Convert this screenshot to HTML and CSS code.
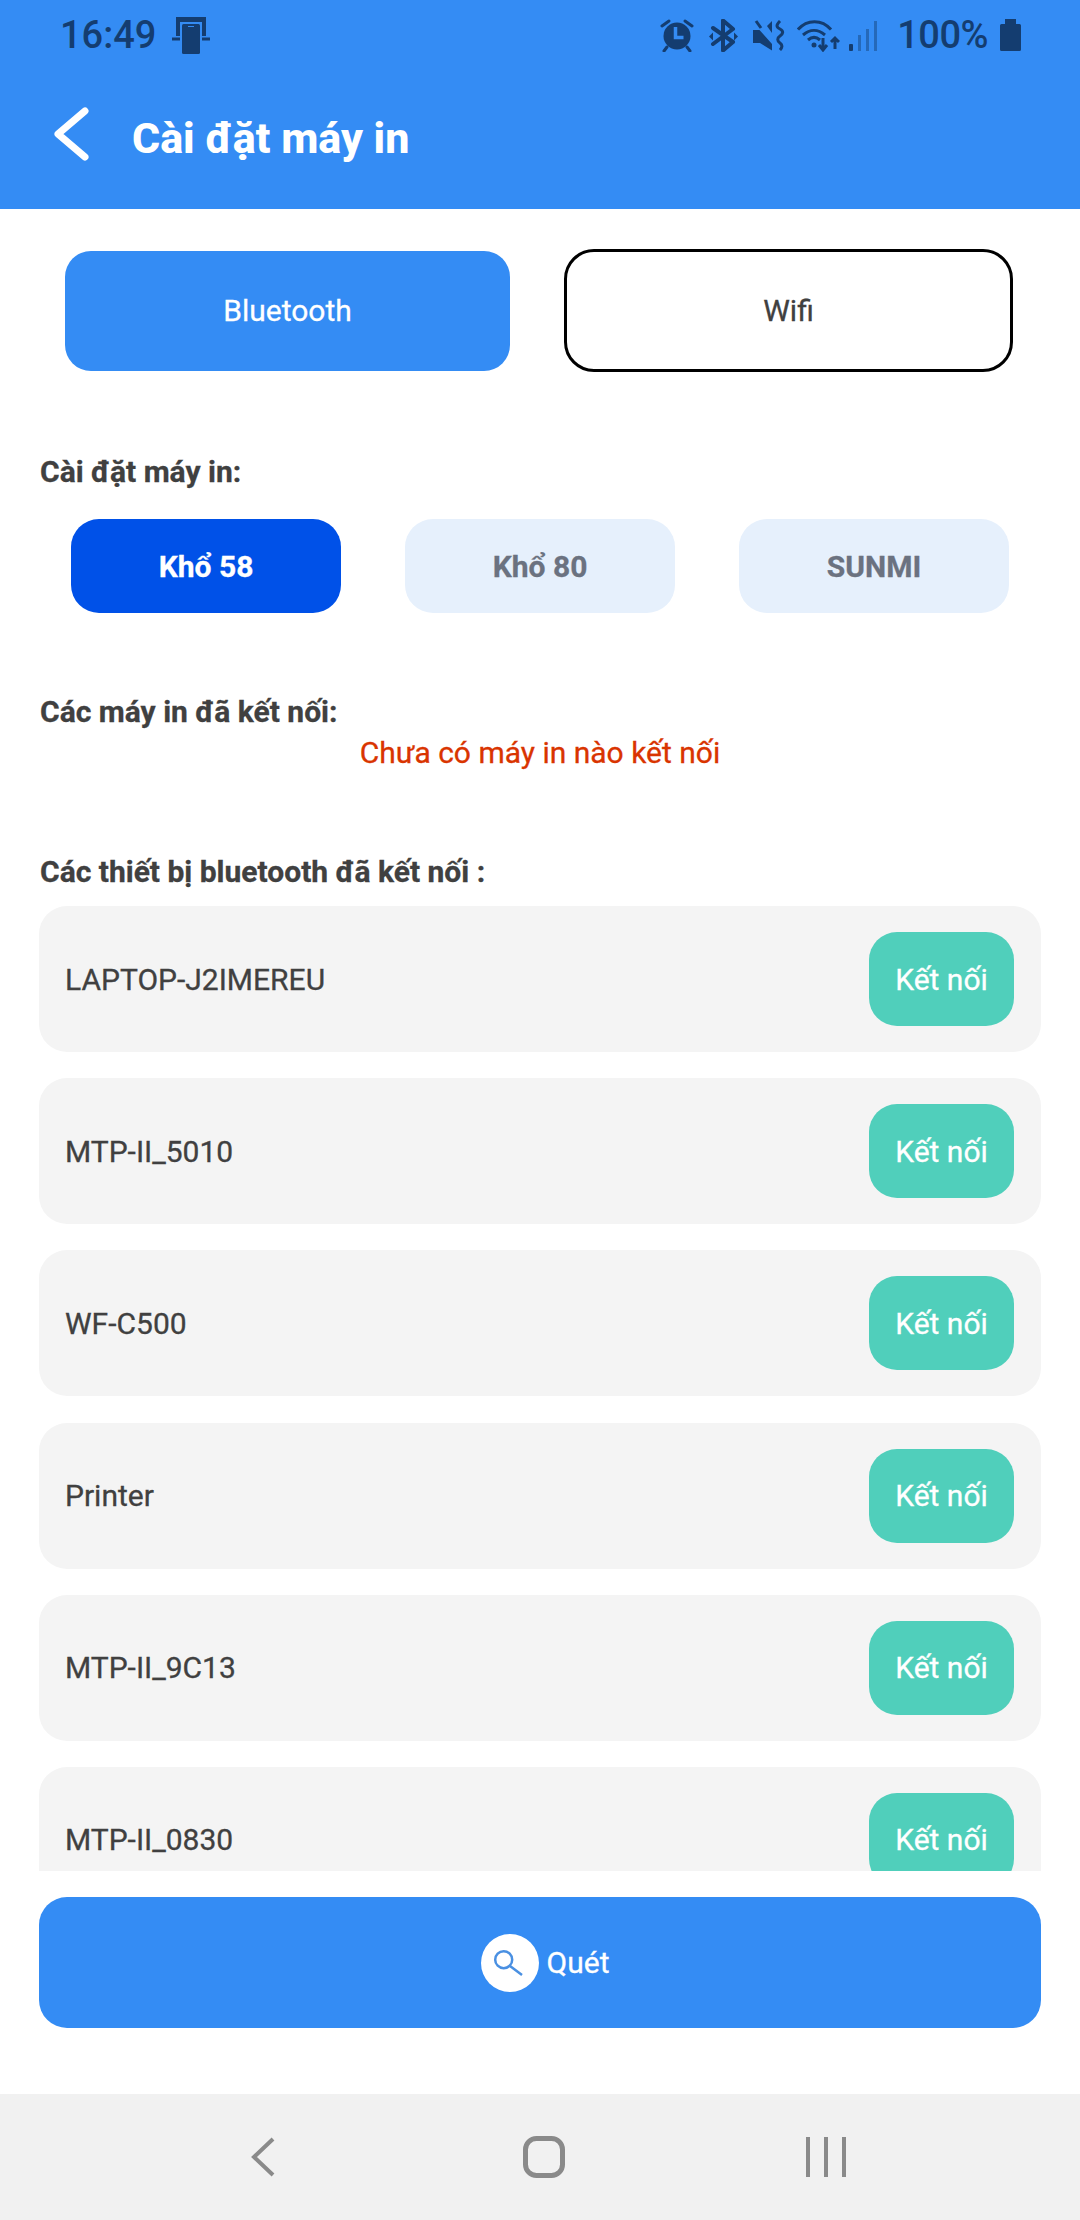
FILE: index.html
```html
<!DOCTYPE html>
<html lang="vi">
<head>
    <meta charset="UTF-8">
    <meta name="viewport" content="width=device-width, initial-scale=1.0">
    <title>Cài đặt máy in</title>
    <link rel="stylesheet" href="styles.css">
</head>
<body>
    <header class="app-header">
        <div class="status-bar">
            <div class="status-left">
                <span class="status-time">16:49</span>
                <svg class="icon-cast" width="38" height="37" viewBox="0 0 38 37">
                    <path d="M4 0h30v19h-4V5H8v14H4z" fill="#143d70"/>
                    <rect x="10" y="7" width="18" height="30" rx="1.500" fill="#143d70"/>
                    <path d="M16 9.500h6" stroke="#348cf4" stroke-width="1"/>
                    <path d="M0 22h8M30 22h8" stroke="#143d70" stroke-width="3"/>
                </svg>
            </div>
            <div class="status-right">
                <svg class="icon-alarm" width="34" height="34" viewBox="0 0 34 34">
                    <circle cx="17" cy="18" r="13.500" fill="#143d70"/>
                    <path d="M15.500 9v10.500h8" fill="none" stroke="#348cf4" stroke-width="3.500"/>
                    <path d="M2 8l7-5M32 8l-7-5M7 29l-3 4M27 29l3 4" stroke="#143d70" stroke-width="3" stroke-linecap="round"/>
                </svg>
                <svg class="icon-bt" width="29" height="33" viewBox="0 0 29 33">
                    <path d="M4 9l20 14-10 8.500V1.500L24 10 4 25" fill="none" stroke="#143d70" stroke-width="4" stroke-linejoin="round" stroke-linecap="round"/>
                    <path d="M0 17.500l4-4v8zM29 17.500l-4-4v8z" fill="#143d70"/>
                </svg>
                <svg class="icon-mute" width="32" height="31" viewBox="0 0 32 31">
                    <path d="M0 10h6.500L19 24v6.500L7 23H0z" fill="#143d70"/>
                    <path d="M3 1l5 7" stroke="#143d70" stroke-width="3"/>
                    <path d="M14 6l5-5v12z" fill="#143d70"/>
                    <path d="M27 1c-4 4-4 6 0 8s3 5 0 7-3 5 0 7 2 5 0 7" fill="none" stroke="#143d70" stroke-width="3"/>
                </svg>
                <svg class="icon-wifi" width="43" height="33" viewBox="0 0 43 33">
                    <path d="M1 10.500C10 0 25 0 34 10.500M6 16c7-6 15-6 22 0M11 21c4-3.500 8-3.500 12 0" fill="none" stroke="#143d70" stroke-width="3"/>
                    <circle cx="17" cy="26" r="2.500" fill="#143d70"/>
                    <path d="M26 19v12m-4-5l4 5 4-5M38 30V19m-4 4l4-4 4 4" fill="none" stroke="#143d70" stroke-width="3"/>
                </svg>
                <svg class="icon-signal" width="29" height="31" viewBox="0 0 29 31">
                    <rect x="0" y="24" width="4" height="7" rx="1" fill="#143d70"/>
                    <rect x="9" y="15" width="3" height="16" fill="#143d70" opacity="0.450"/>
                    <rect x="17" y="9" width="3" height="22" fill="#143d70" opacity="0.450"/>
                    <rect x="25" y="1" width="3" height="30" fill="#143d70" opacity="0.450"/>
                </svg>
                <span class="status-battery">100%</span>
                <svg class="icon-battery" width="21" height="32" viewBox="0 0 21 32">
                    <path d="M5 0h11v5h3.500a1.500 1.500 0 0 1 1.500 1.500v24a1.500 1.500 0 0 1-1.500 1.500h-18A1.500 1.500 0 0 1 0 30.500v-24A1.500 1.500 0 0 1 1.500 5H5z" fill="#143d70"/>
                </svg>
            </div>
        </div>
        <div class="title-bar">
            <svg class="icon-back" width="38" height="54" viewBox="0 0 38 54">
                <path d="M33 4L6 27l27 23" fill="none" stroke="#fff" stroke-width="7" stroke-linecap="round" stroke-linejoin="round"/>
            </svg>
            <h1 class="page-title">Cài đặt máy in</h1>
        </div>
    </header>

    <main class="content">
        <div class="mode-tabs">
            <div class="mode-btn mode-active">Bluetooth</div>
            <div class="mode-btn mode-outline">Wifi</div>
        </div>

        <h2 class="section-label label-setup">Cài đặt máy in:</h2>
        <div class="size-tabs">
            <div class="size-btn size-active">Khổ 58</div>
            <div class="size-btn">Khổ 80</div>
            <div class="size-btn">SUNMI</div>
        </div>

        <h2 class="section-label">Các máy in đã kết nối:</h2>
        <p class="empty-note">Chưa có máy in nào kết nối</p>

        <h2 class="section-label">Các thiết bị bluetooth đã kết nối :</h2>
        <div class="device-list">
            <div class="device-row"><span>LAPTOP-J2IMEREU</span><div class="connect-btn">Kết nối</div></div>
            <div class="device-row"><span>MTP-II_5010</span><div class="connect-btn">Kết nối</div></div>
            <div class="device-row"><span>WF-C500</span><div class="connect-btn">Kết nối</div></div>
            <div class="device-row"><span>Printer</span><div class="connect-btn">Kết nối</div></div>
            <div class="device-row"><span>MTP-II_9C13</span><div class="connect-btn">Kết nối</div></div>
            <div class="device-row"><span>MTP-II_0830</span><div class="connect-btn">Kết nối</div></div>
        </div>

        <div class="scan-btn">
            <span class="scan-icon">
                <svg width="34" height="34" viewBox="0 0 34 34">
                    <circle cx="10.700" cy="13.700" r="8.500" fill="none" stroke="#4a90e2" stroke-width="2.500"/>
                    <path d="M17 20l12 9" stroke="#4a90e2" stroke-width="2.500"/>
                </svg>
            </span>
            <span>Quét</span>
        </div>
    </main>

    <nav class="nav-bar">
        <svg width="24" height="40" viewBox="0 0 24 40">
            <path d="M22 2L3 20l19 18" fill="none" stroke="#8a8a8a" stroke-width="4"/>
        </svg>
        <svg class="nav-home" width="42" height="42" viewBox="0 0 42 42">
            <rect x="2.500" y="2.500" width="37" height="37" rx="11" fill="none" stroke="#8a8a8a" stroke-width="5"/>
        </svg>
        <svg class="nav-recent" width="40" height="40" viewBox="0 0 40 40">
            <path d="M2 0v40M20 0v40M38 0v40" stroke="#8a8a8a" stroke-width="4"/>
        </svg>
    </nav>
</body>
</html>
```

FILE: styles.css
```css
* {
    box-sizing: border-box;
}

html, body {
    margin: 0;
    padding: 0;
}

body {
    width: 1080px;
    height: 2220px;
    display: flex;
    flex-direction: column;
    background-color: white;
    font-family: Roboto, "Liberation Sans", sans-serif;
    overflow: hidden;
}

.app-header {
    height: 209px;
    background-color: #348cf4;
}

.status-bar {
    height: 70px;
    padding: 0 59px 0 60px;
    display: flex;
    justify-content: space-between;
    align-items: center;
    color: #143d70;
    font-size: 38px;
    font-weight: 500;
}

.status-left,
.status-right {
    display: flex;
    align-items: center;
}

.icon-cast {
    margin-left: 16px;
}

.icon-bt,
.icon-mute {
    margin-left: 15px;
}

.icon-wifi {
    margin-left: 12px;
}

.icon-signal {
    margin-left: 9px;
}

.status-battery {
    margin-left: 19px;
    letter-spacing: -0.5px;
}

.icon-battery {
    margin-left: 12px;
}

.title-bar {
    height: 139px;
    padding: 0 0 12px 52px;
    display: flex;
    align-items: center;
}

.page-title {
    margin: 9px 0 0 42px;
    color: white;
    font-size: 43px;
    font-weight: 800;
}

.content {
    flex: 1;
    display: flex;
    flex-direction: column;
}

.mode-tabs {
    margin-top: 40px;
    padding-left: 65px;
    display: flex;
    align-items: center;
    gap: 54px;
}

.mode-btn {
    display: flex;
    justify-content: center;
    align-items: center;
    font-size: 30px;
    -webkit-text-stroke: 0.3px;
}

.mode-active {
    width: 445px;
    height: 120px;
    background-color: #348cf4;
    border-radius: 26px;
    color: white;
}

.mode-outline {
    width: 449px;
    height: 123px;
    background-color: white;
    border: 3px solid black;
    border-radius: 30px;
    color: #404040;
}

.section-label {
    height: 40px;
    margin: 79px 0 0 40px;
    color: #404040;
    font-size: 30px;
    font-weight: 700;
    line-height: 40px;
    -webkit-text-stroke: 0.3px;
}

.label-setup {
    margin-top: 80px;
}

.size-tabs {
    margin-top: 27px;
    padding-left: 71px;
    display: flex;
    gap: 64px;
}

.size-btn {
    width: 270px;
    height: 94px;
    display: flex;
    justify-content: center;
    align-items: center;
    background-color: #e6f0fc;
    border-radius: 28px;
    color: #6b7280;
    font-size: 30px;
    font-weight: 700;
    -webkit-text-stroke: 0.3px;
}

.size-active {
    background-color: #0051e8;
    color: white;
}

.empty-note {
    height: 40px;
    margin: 1px 0 0;
    color: #d93400;
    font-size: 30px;
    line-height: 40px;
    text-align: center;
    -webkit-text-stroke: 0.3px;
}

.device-list {
    height: 965px;
    margin: 14px 39px 0;
    display: flex;
    flex-direction: column;
    gap: 26.2px;
    overflow: hidden;
}

.device-row {
    flex: none;
    height: 146px;
    padding: 0 27px 0 26px;
    display: flex;
    justify-content: space-between;
    align-items: center;
    background-color: #f4f4f4;
    border-radius: 28px;
    color: #404040;
    font-size: 30px;
    -webkit-text-stroke: 0.3px;
}

.connect-btn {
    width: 145px;
    height: 94px;
    display: flex;
    justify-content: center;
    align-items: center;
    background-color: #50cfbb;
    border-radius: 28px;
    color: white;
}

.scan-btn {
    height: 131px;
    margin: 26px 39px 0;
    padding-left: 10px;
    display: flex;
    justify-content: center;
    align-items: center;
    gap: 8px;
    background-color: #348cf4;
    border-radius: 28px;
    color: white;
    font-size: 30px;
    -webkit-text-stroke: 0.3px;
}

.scan-icon {
    width: 58px;
    height: 58px;
    display: flex;
    justify-content: center;
    align-items: center;
    background-color: white;
    border-radius: 50%;
}

.nav-bar {
    height: 126px;
    padding-left: 251px;
    display: flex;
    align-items: center;
    background-color: #f1f1f1;
}

.nav-home {
    margin-left: 248px;
}

.nav-recent {
    margin-left: 241px;
}
```
